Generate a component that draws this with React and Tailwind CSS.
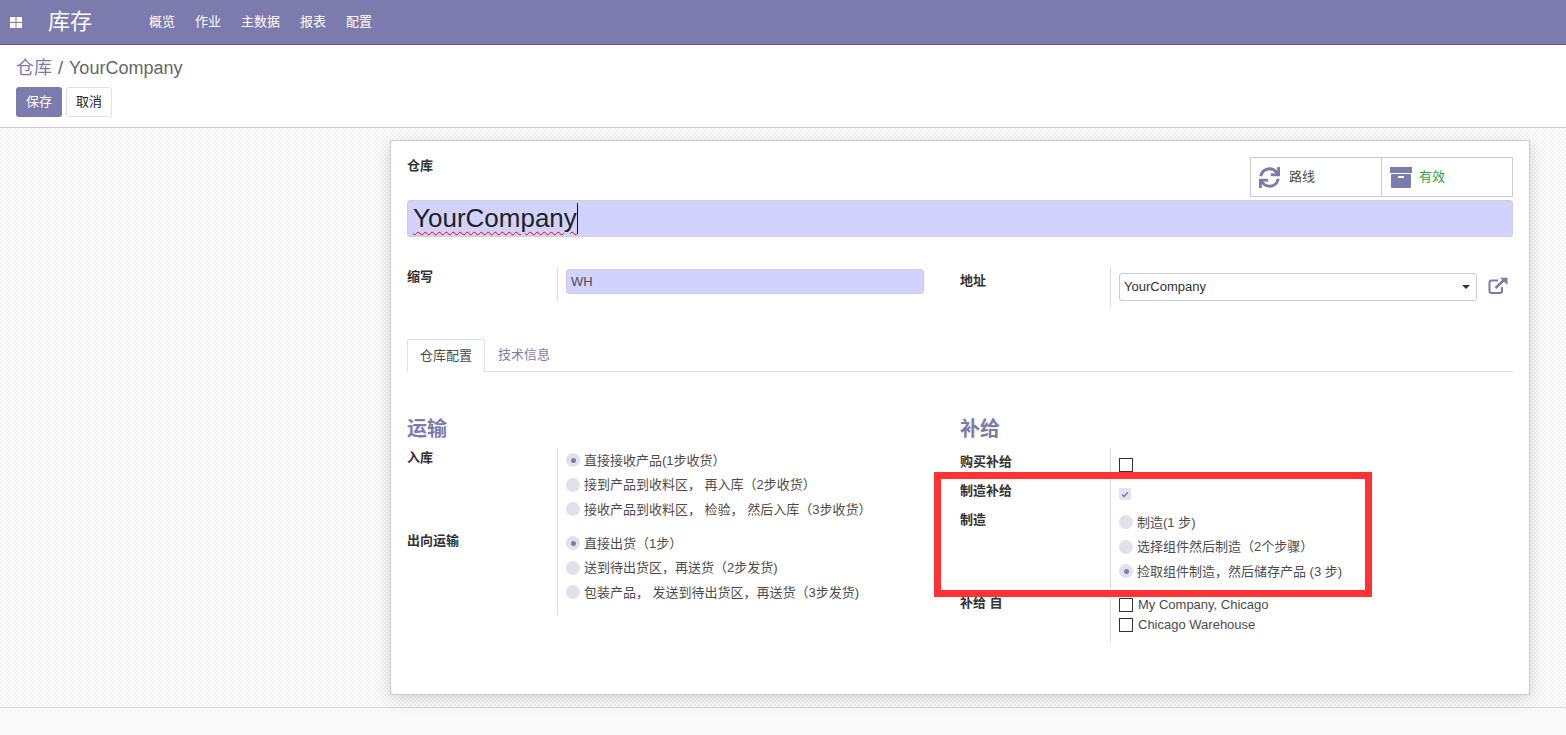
import React from "react";
import { FaSync } from "react-icons/fa";

const font = "font-['Liberation_Sans','Noto_Sans_CJK_SC',sans-serif]";

function Radio({ on, children }) {
  return (
    <div className="flex h-[24.5px] items-center text-[13px] text-[#4c4c4c] whitespace-nowrap">
      <span className="mr-[4px] flex h-[14px] w-[14px] items-center justify-center rounded-full bg-[#e1e2e9]">
        {on && <span className="h-[5px] w-[5px] rounded-full bg-[#7c7bad]" />}
      </span>
      {children}
    </div>
  );
}

function Box() {
  return <span className="mr-[5px] block h-[14px] w-[14px] border border-[#333333] bg-white" />;
}

function Label({ children, cls = "" }) {
  return <div className={`text-[13px] font-bold leading-[20px] text-[#333333] ${cls}`}>{children}</div>;
}

function Row({ label, labelCls, h, valueCls = "", children }) {
  return (
    <div className={`flex ${h}`}>
      <div className="w-[150px] shrink-0"><Label cls={labelCls}>{label}</Label></div>
      <div className={`flex-1 border-l border-[#dcdcdc] pl-[8px] ${valueCls}`}>{children}</div>
    </div>
  );
}

export default function App() {
  return (
    <div className={`${font} flex h-[735px] w-[1566px] flex-col overflow-hidden bg-white`}>
      <header className="flex h-[45px] shrink-0 items-center border-b border-[#5f5e97] bg-[#7c7bad] text-white">
        <svg width="12" height="11" viewBox="0 0 12 11" className="ml-[10px]" fill="#ffffff">
          <rect x="0" y="0" width="5.5" height="5" /><rect x="6.5" y="0" width="5.5" height="5" />
          <rect x="0" y="6" width="5.5" height="5" /><rect x="6.5" y="6" width="5.5" height="5" />
        </svg>
        <span className="ml-[26px] text-[22px] leading-none">库存</span>
        <nav className="ml-[57px] flex gap-[20px] text-[13px]">
          <span>概览</span><span>作业</span><span>主数据</span><span>报表</span><span>配置</span>
        </nav>
      </header>

      <div className="h-[83px] shrink-0 border-b border-[#cccccc] bg-white pl-[16px]">
        <div className="pt-[11px] text-[18px] leading-[24px] text-[#666666]">
          <span className="text-[#7c7bad]">仓库</span><span className="mx-[6px]">/</span>YourCompany
        </div>
        <div className="mt-[7px] flex gap-[4px] text-[13px]">
          <button className="h-[30px] w-[46px] rounded-[3px] bg-[#7c7bad] text-white">保存</button>
          <button className="h-[30px] w-[46px] rounded-[3px] border border-[#dee2e6] bg-white text-[#212529]">取消</button>
        </div>
      </div>

      <main className="h-[580px] shrink-0 border-b border-[#d8d8d8] bg-white bg-[conic-gradient(#f3f3f3_25%,#ffffff_0_50%,#f3f3f3_0_75%,#ffffff_0)] bg-[length:4px_4px] pt-[12px]">
        <div className="relative z-10 ml-[390px] h-[555px] w-[1140px] border border-[#c9c9d6] bg-white px-[16px] pt-[16px] shadow-[0_4px_16px_rgba(0,0,0,0.16)]">
          <div className="flex h-[43px] items-start justify-between">
            <Label cls="mt-[-1px]">仓库</Label>
            <div className="flex h-[40px] w-[263px] border border-[#cccccc] text-[13px]">
              <div className="flex w-[131px] items-center border-r border-[#cccccc] pl-[8px] text-[#4c4c4c]">
                <FaSync className="mr-[9px] text-[21px] text-[#7c7bad]" />路线
              </div>
              <div className="flex flex-1 items-center pl-[8px] text-[#28a745]">
                <svg width="22" height="21" viewBox="0 0 22 21" className="mr-[7px]">
                  <rect x="0" y="0" width="22" height="6" fill="#7c7bad" />
                  <rect x="1" y="7" width="20" height="14" rx="1" fill="#7c7bad" />
                  <rect x="8" y="9" width="6" height="2" fill="#ffffff" />
                </svg>
                有效
              </div>
            </div>
          </div>

          <div className="flex h-[37px] items-center rounded-[3px] border border-[#cfcfe0] bg-[#d2d2ff] pl-[5px] text-[26px] text-[#222222]">
            <span className="underline decoration-wavy decoration-[#ff0000] decoration-1 underline-offset-[4px]">YourCompany</span>
            <span className="h-[31px] w-px bg-[#111111]" />
          </div>

          <div className="mt-[30px] grid h-[42px] grid-cols-[553px_1fr]">
            <div className="flex">
              <Label cls="w-[150px] shrink-0">缩写</Label>
              <div className="h-[35px] border-l border-[#dcdcdc] pl-[8px]">
                <div className="mt-[2px] flex h-[25px] w-[358px] items-center rounded-[3px] border border-[#cfcfe0] bg-[#d2d2ff] pl-[4px] text-[13px] text-[#4c4c4c]">WH</div>
              </div>
            </div>
            <div className="flex">
              <Label cls="mt-[4px] w-[150px] shrink-0">地址</Label>
              <div className="flex h-[41px] flex-1 items-start border-l border-[#dcdcdc] pl-[8px]">
                <div className="mt-[6px] flex h-[28px] w-[358px] items-center justify-between rounded-[3px] border border-[#cccccc] bg-white pl-[4px] pr-[6px] text-[13px] text-[#333333]">
                  YourCompany
                  <span className="h-0 w-0 border-x-[4px] border-t-[4px] border-x-transparent border-t-[#333333]" />
                </div>
                <svg width="20" height="18" viewBox="0 0 20 18" className="ml-[11px] mt-[10px]" fill="none" stroke="#7c7bad" strokeWidth="2">
                  <path d="M10 3.5H3.5Q1.5 3.5 1.5 5.5V14Q1.5 16 3.5 16H12Q14 16 14 14V10" />
                  <path d="M7.5 11L16 3" strokeWidth="2.6" />
                  <path d="M12 0.8H19.5V8Z" fill="#7c7bad" stroke="none" />
                </svg>
              </div>
            </div>
          </div>

          <div className="mt-[30px] flex h-[33px] border-b border-[#dee2e6] text-[13px]">
            <div className="flex h-[33px] w-[78px] items-center justify-center rounded-t-[3px] border border-b-0 border-[#dee2e6] bg-white text-[#4c4c4c]">仓库配置</div>
            <div className="flex items-center pl-[13px] text-[#7c7bad]">技术信息</div>
          </div>

          <div className="mt-[42px] grid grid-cols-[553px_1fr]">
            <div>
              <div className="h-[34px] text-[20px] font-bold leading-[30px] text-[#7c7bad]">运输</div>
              <Row label="入库" h="h-[83px]">
                <Radio on>直接接收产品(1步收货）</Radio>
                <Radio>接到产品到收料区， 再入库（2步收货）</Radio>
                <Radio>接收产品到收料区， 检验， 然后入库（3步收货）</Radio>
              </Row>
              <Row label="出向运输" h="h-[84px]">
                <Radio on>直接出货（1步）</Radio>
                <Radio>送到待出货区，再送货（2步发货)</Radio>
                <Radio>包装产品， 发送到待出货区，再送货（3步发货)</Radio>
              </Row>
            </div>
            <div>
              <div className="h-[34px] text-[20px] font-bold leading-[30px] text-[#7c7bad]">补给</div>
              <Row label="购买补给" labelCls="mt-[4px]" h="h-[29px]" valueCls="pt-[10px]">
                <Box />
              </Row>
              <Row label="制造补给" labelCls="mt-[4px]" h="h-[29px]" valueCls="pt-[11px]">
                <span className="flex h-[12px] w-[12px] items-center justify-center rounded-[2px] bg-[#e3e3f0]">
                  <svg width="8" height="7" viewBox="0 0 8 7" fill="none" stroke="#7c7bad" strokeWidth="1.5"><path d="M1 3.5L3 5.5L7 1.2" /></svg>
                </span>
              </Row>
              <Row label="制造" labelCls="mt-[4px]" h="h-[83px]" valueCls="pt-[4px]">
                <Radio>制造(1 步)</Radio>
                <Radio>选择组件然后制造（2个步骤）</Radio>
                <Radio on>捡取组件制造，然后储存产品 (3 步)</Radio>
              </Row>
              <Row label="补给 自" labelCls="mt-[4px]" h="h-[53px]" valueCls="pt-[6px]">
                <div className="flex h-[20px] items-center text-[13px] text-[#4c4c4c]"><Box />My Company, Chicago</div>
                <div className="flex h-[20px] items-center text-[13px] text-[#4c4c4c]"><Box />Chicago Warehouse</div>
              </Row>
            </div>
          </div>
        </div>
      </main>

      <footer className="flex-1 bg-[#f9f9f9]" />

      <div className="absolute left-[934px] top-[472px] z-20 h-[125px] w-[438px] border-[7px] border-[#ff3333]" />
    </div>
  );
}
